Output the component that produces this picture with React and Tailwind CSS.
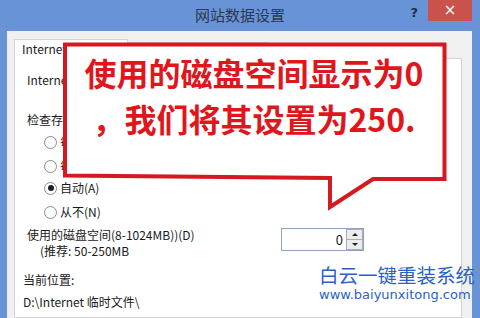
import React from "react";

const Radio = ({ checked, label }) => (
  <div className="flex items-center h-[16px] ml-[17px]">
    <span className="w-[13px] h-[13px] rounded-full border border-[#8a8a8a] bg-white flex items-center justify-center">
      {checked && <span className="w-[6px] h-[6px] rounded-full bg-[#1e1e1e]" />}
    </span>
    <span className="ml-[3px]">{label}</span>
  </div>
);

const App = () => {
  return (
    <div className="relative w-[480px] h-[318px] overflow-hidden bg-[#6893d6] flex flex-col font-['Noto_Sans_CJK_SC',sans-serif]">
      {/* Title bar */}
      <div className="h-[31px] grid grid-cols-[1fr_auto_1fr]">
        <div />
        <div className="self-center text-[15px] leading-[20px] text-[#2a3a52] mt-[-1px]">网站数据设置</div>
        <div className="flex justify-end items-start pr-[8px]">
          <span className="mt-[3px] mr-[10px] text-[13px] font-bold text-[#1f2f4a] font-['DejaVu_Sans',sans-serif]">?</span>
          <div className="w-[44px] h-[21px] bg-[#c9524b] flex items-center justify-center text-white text-[15px] leading-none font-['DejaVu_Sans',sans-serif]">
            ×
          </div>
        </div>
      </div>

      {/* Client area */}
      <div className="ml-[7px] w-[465px] flex-1 bg-[#f0f0f0] pt-[8px] pl-[7px] pr-[10px] flex flex-col text-[12px] text-[#1a1a1a]">
        <div className="flex items-end h-[20px]">
          <div className="relative z-10 w-[114px] h-[20px] bg-white border border-b-0 border-[#d4d4d4] pl-[7px] leading-[18px]">
            Internet 临时文件
          </div>
          <div className="w-[57px] h-[17px] border border-b-0 border-l-0 border-[#d4d4d4] pl-[6px] leading-[16px]">历史记录</div>
          <div className="w-[82px] h-[17px] border border-b-0 border-l-0 border-[#d4d4d4] pl-[6px] leading-[16px]">缓存和数据库</div>
        </div>

        <div className="flex-1 mt-[-1px] bg-white border border-[#d4d4d4] pl-[12px] flex flex-col leading-[16px]">
          <div className="mt-[13px]">Internet 临时文件</div>
          <div className="mt-[24px]">检查存储的页面的较新版本:</div>
          <div className="mt-[6px]"><Radio label="每次访问网页时(E)" /></div>
          <div className="mt-[8px]"><Radio label="每次启动 Internet Explorer 时(S)" /></div>
          <div className="mt-[6px]"><Radio checked label="自动(A)" /></div>
          <div className="mt-[8px]"><Radio label="从不(N)" /></div>

          <div className="mt-[7px] flex items-start">
            <div className="w-[254px] flex flex-col">
              <span>使用的磁盘空间(8-1024MB))(D)</span>
              <span className="ml-[13px]">(推荐: 50-250MB</span>
            </div>
            <div className="mt-[1px] w-[83px] h-[23px] flex border border-[#8aa5c6] bg-white">
              <div className="flex-1 text-right pr-[3px] text-[13px] leading-[21px]">0</div>
              <div className="w-[17px] flex flex-col">
                <div className="flex-1 border border-[#adadad] bg-[#ececec] flex items-center justify-center">
                  <span className="w-0 h-0 border-l-[3px] border-r-[3px] border-b-[3px] border-l-transparent border-r-transparent border-b-[#222]" />
                </div>
                <div className="flex-1 border border-t-0 border-[#adadad] bg-[#ececec] flex items-center justify-center">
                  <span className="w-0 h-0 border-l-[3px] border-r-[3px] border-t-[3px] border-l-transparent border-r-transparent border-t-[#222]" />
                </div>
              </div>
            </div>
          </div>

          <div className="mt-[13px] ml-[-4px]">当前位置:</div>
          <div className="mt-[6px] ml-[-4px]">D:\Internet 临时文件\</div>
        </div>
      </div>

      {/* Callout */}
      <div className="absolute z-20 left-[61px] top-[40px] w-[390px] h-[172px]">
        <svg className="absolute inset-0" width="390" height="172" viewBox="0 0 390 172">
          <path
            d="M4 4.5 H383.5 V139 H312 L269 167 V138 L4 135.5 Z"
            fill="#ffffff"
            stroke="#d51920"
            strokeWidth="4"
            strokeLinejoin="miter"
          />
        </svg>
        <div className="absolute left-0 right-0 top-[9px] pr-[4px] text-center text-[32px] leading-[46px] font-bold text-[#e0161d]">
          <div>使用的磁盘空间显示为0</div>
          <div>，我们将其设置为250.</div>
        </div>
      </div>

      {/* Watermark */}
      <div className="absolute z-20 left-[319px] top-[263px] flex flex-col text-[#2b62c6]">
        <span className="text-[19.5px] leading-[24px]">白云一键重装系统</span>
        <span className="text-[13px] leading-[16px] font-['DejaVu_Sans',sans-serif]">www.baiyunxitong.com</span>
      </div>
    </div>
  );
};

export default App;
